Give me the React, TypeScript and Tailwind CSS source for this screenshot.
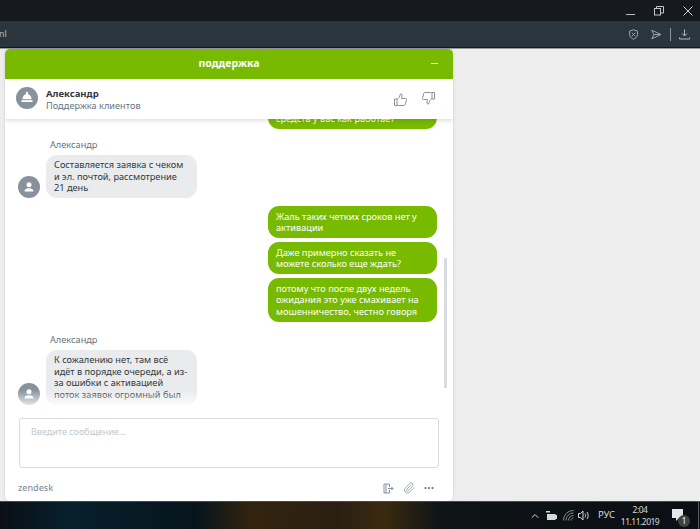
import { ChevronUp, Paperclip, MoreHorizontal } from "lucide-react";

const font = "font-['Noto_Sans','Open_Sans',sans-serif]";

const UserAvatar = ({ bell }: { bell?: boolean }) => (
  <div className={`w-[22px] h-[22px] rounded-full bg-[#87929d] flex items-center justify-center shrink-0 ${bell ? "mb-[2px]" : ""}`}>
    {bell ? (
      <svg width="14" height="14" viewBox="0 0 14 14" fill="#fff">
        <circle cx="7" cy="2" r="1.200" />
        <path d="M2.500 8.200C2.500 5.200 4.500 3 7 3s4.500 2.200 4.500 5.200z" />
        <rect x="1.500" y="9.200" width="11" height="1.800" />
      </svg>
    ) : (
      <svg width="12" height="12" viewBox="0 0 12 12" fill="#fff">
        <circle cx="6" cy="3.800" r="2.500" />
        <path d="M1.500 10.500C1.500 8.300 3.500 7.200 6 7.200s4.500 1.100 4.500 3.300z" />
      </svg>
    )}
  </div>
);

const Mine = ({ children }: { children: React.ReactNode }) => (
  <div className="ml-[263px] w-[169px] rounded-[11px] bg-[#78ba00] px-[8px] py-[4.500px] text-[9.200px] leading-[11.500px] text-white">
    {children}
  </div>
);

const Theirs = ({ children }: { children: React.ReactNode }) => (
  <div className="flex flex-col pl-[13px]">
    <div className="ml-[32px] text-[9.200px] leading-[12px] text-[#68737d]">Александр</div>
    <div className="mt-[4px] flex items-end gap-[6px]">
      <UserAvatar />
      <div className="w-[151px] rounded-[11px] bg-[#e9ebed] px-[8px] py-[4.500px] text-[9.200px] leading-[11.500px] text-[#2f3941]">
        {children}
      </div>
    </div>
  </div>
);

export default function App() {
  return (
    <div className={`${font} w-[700px] h-[529px] flex flex-col overflow-hidden bg-[#ededed]`}>
      {/* window title bar */}
      <div className="h-[21px] shrink-0 bg-[#16191d] flex items-center justify-end pr-[7px] gap-[19px]">
        <div className="w-[9px] h-px bg-[#b9bcbf] mt-[7px]" />
        <svg width="10" height="10" viewBox="0 0 10 10" fill="none" stroke="#c4c7ca">
          <rect x="0.500" y="2.500" width="6" height="6.500" />
          <path d="M2.500 2.500V.5H9.500V7H6.500" />
        </svg>
        <svg width="10" height="10" viewBox="0 0 10 10" stroke="#d0d2d4">
          <path d="M.5.500l9 9M9.500.500l-9 9" />
        </svg>
      </div>
      {/* browser toolbar */}
      <div className="h-[27px] shrink-0 bg-[#2b353e] border-b border-[#14181c] flex items-center justify-between pr-[10px]">
        <span className="text-[9px] text-[#b5bbc0] -ml-[4px]">ml</span>
        <div className="flex items-center">
          <svg width="11" height="11" viewBox="0 0 11 11" fill="none" stroke="#9aa3aa">
            <path d="M5.500 .8l4 1.300v3.400c0 2.300-2 3.900-4 4.700-2-.8-4-2.400-4-4.700V2.100z" />
            <path d="M3.800 3.800l3.400 3.400M7.200 3.800L3.800 7.200" />
          </svg>
          <svg className="ml-[12px]" width="11" height="11" viewBox="0 0 11 11" fill="none" stroke="#9aa3aa">
            <path d="M.8 1.200L10 5.500.8 9.800 2.800 5.500zM2.800 5.500H10" />
          </svg>
          <div className="ml-[8px] w-px h-[13px] bg-[#8b949b]" />
          <svg className="ml-[8px]" width="11" height="11" viewBox="0 0 11 11" fill="none" stroke="#b3b9be">
            <path d="M5.500 .5V6.500M3 4.500l2.500 2.500L8 4.500M.5 8.500v1.500h10V8.500" />
          </svg>
        </div>
      </div>
      {/* page */}
      <div className="flex-1 min-h-0 pl-[5px] border-t border-[#9a9a9a]">
        <div className="w-[448px] h-[452px] bg-white rounded-[5px] flex flex-col overflow-hidden shadow-[0_0_3px_rgba(0,0,0,0.15)]">
          <div className="h-[30px] shrink-0 bg-[#78ba00] flex items-center justify-center relative">
            <span className="text-[10.500px] font-bold text-white">поддержка</span>
            <div className="absolute right-[15px] top-[14px] w-[7px] h-px bg-white" />
          </div>
          <div className="relative z-10 h-[40px] shrink-0 bg-white flex items-center pl-[11px] pr-[18px] shadow-[0_2px_4px_rgba(0,0,0,0.12)]">
            <UserAvatar bell />
            <div className="ml-[8px] flex-1 mt-[2px]">
              <div className="text-[9.500px] leading-[12px] font-bold text-[#2f3941]">Александр</div>
              <div className="text-[9.200px] leading-[12px] text-[#68737d]">Поддержка клиентов</div>
            </div>
            <svg width="13" height="13" viewBox="0 0 13 13" fill="none" stroke="#87929d">
              <path d="M.5 6h2.500v6.500H.5zM3 6.500c1.500-1 3-3 3.300-5.500.9-.5 2 .4 1.700 2L7.500 5.500h4.200c.8 0 1 .8.800 1.400l-1.300 4.800c-.2.500-.5.800-1 .8H4.500L3 12" />
            </svg>
            <svg className="ml-[15px] -mt-[2px]" width="13" height="13" viewBox="0 0 13 13" fill="none" stroke="#87929d">
              <path d="M12.500 7H10V.5h2.500zM10 6.500c-1.500 1-3 3-3.300 5.500-.9.500-2-.4-1.700-2l.5-2.500H1.300c-.8 0-1-.8-.8-1.400L1.800 1.300c.2-.5.500-.8 1-.8h5.700L10 1" />
            </svg>
          </div>
          {/* message list: scrolled, the first bubble is cut off under the header */}
          <div className="relative flex-1 min-h-0 overflow-hidden">
            <div className="flex flex-col -mt-[22px]">
              <Mine>
                <span className="block h-[11px]" />
                средств у вас как работает
              </Mine>
              <div className="mt-[10px]">
                <Theirs>
                  Составляется заявка с чеком и эл. почтой, рассмотрение 21 день
                </Theirs>
              </div>
              <div className="mt-[8px] flex flex-col gap-[4px]">
                <Mine>Жаль таких четких сроков нет у активации</Mine>
                <Mine>Даже примерно сказать не можете сколько еще ждать?</Mine>
                <Mine>потому что после двух недель ожидания это уже смахивает на мошенничество, честно говоря</Mine>
              </div>
              <div className="mt-[12px]">
                <Theirs>К сожалению нет, там всё идёт в порядке очереди, а из-за ошибки с активацией поток заявок огромный был</Theirs>
              </div>
            </div>
            <div className="absolute right-[6px] top-[139px] w-[3px] h-[130px] bg-[#d8dcde]" />
            <div className="absolute left-0 right-0 bottom-0 h-[28px] bg-gradient-to-t from-white from-30% to-transparent" />
          </div>
          <div className="h-[51px] shrink-0 px-[14px]">
            <div className="h-[50px] border border-[#d8dcde] rounded-[3px] bg-white pl-[11px] pt-[7px] text-[9px] leading-[12px] text-[#c2c8cc]">
              Введите сообщение...
            </div>
          </div>
          <div className="h-[32px] shrink-0 flex items-center pt-[6px] pl-[13px] pr-[18px]">
            <span className="flex-1 text-[9px] font-medium text-[#87929d]">zendesk</span>
            <svg width="11" height="11" viewBox="0 0 11 11" fill="none" stroke="#87929d">
              <path d="M6.500 1H1v9h5.500M3 1v9M6.500 1v3M6.500 7v3M5 5.500h5" />
              <path d="M8.500 4l1.500 1.500L8.500 7" fill="#87929d" />
            </svg>
            <Paperclip className="ml-[9px] text-[#87929d]" size={12} strokeWidth={1.500} />
            <MoreHorizontal className="ml-[8px] text-[#68737d]" size={12} strokeWidth={2.500} />
          </div>
        </div>
      </div>
      {/* taskbar */}
      <div className="h-[28px] shrink-0 border-t border-[#4a4a4a] flex items-center justify-end bg-[linear-gradient(90deg,#0a0f14_0%,#06202c_10%,#07141c_28%,#33240f_36%,#2a1f12_48%,#3a2a0f_55%,#0e1316_63%,#0b0f13_100%)] text-[#d6d8da] relative">
        <ChevronUp size={12} className="mr-[4px]" />
        <svg className="mr-[5px]" width="13" height="10" viewBox="0 0 13 10" fill="#d6d8da">
          <path d="M1 0h4v1.500H1zM2 3h8.500v1h1.500v4h-1.500v1H2z" />
        </svg>
        <svg className="mr-[4px]" width="11" height="11" viewBox="0 0 11 11" fill="none" stroke="#8d9195">
          <path d="M.5 10.500C.5 5 5 .5 10.500.5M3 10.500C3 6.400 6.400 3 10.500 3M5.500 10.500c0-2.800 2.200-5 5-5M8 10.500c0-1.400 1.100-2.500 2.500-2.500" />
        </svg>
        <svg className="mr-[8px]" width="12" height="11" viewBox="0 0 12 11" fill="none" stroke="#d6d8da">
          <path d="M.5 3.500h2L5 1v9L2.500 7.500h-2zM7 3.500c.8 1.200.8 2.800 0 4M9 2c1.500 2 1.500 5 0 7" />
        </svg>
        <span className="text-[9.500px] mr-[1px]">РУС</span>
        <div className="w-[48px] text-center text-[8.500px] tracking-[-0.5px] leading-[12px]">
          <div>2:04</div>
          <div>11.11.2019</div>
        </div>
        <div className="relative ml-[8px] mr-[14px] w-[14px] h-[14px]">
          <svg width="12" height="13" viewBox="0 0 12 13" fill="#e4e6e8">
            <path d="M0 0h11v9H7l-3 3V9H0z" />
          </svg>
          <div className="absolute -right-[4px] -bottom-[4px] w-[12px] h-[12px] rounded-full bg-[#3d4145] text-[8px] leading-[12px] text-center text-white">1</div>
        </div>
        <div className="absolute right-[1px] top-0 bottom-0 w-px bg-[#555a5e]" />
      </div>
    </div>
  );
}
